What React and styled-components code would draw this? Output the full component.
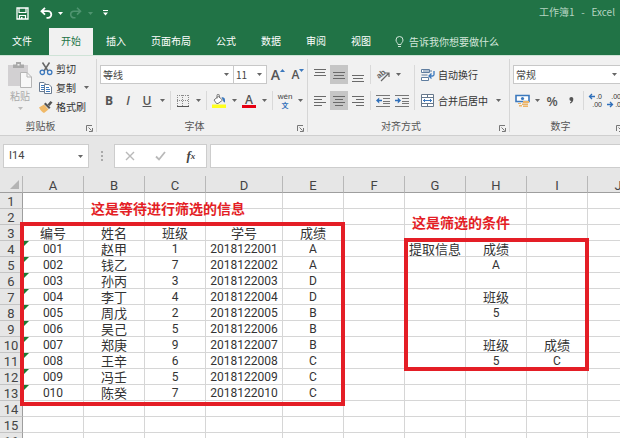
import styled, { createGlobalStyle } from 'styled-components'

const COLUMNS = ['A', 'B', 'C', 'D', 'E', 'F', 'G', 'H', 'I', 'J']
const ROW_COUNT = 16

const students = [
    ['001', '赵甲', '1', '2018122001', 'A'],
    ['002', '钱乙', '7', '2018122002', 'A'],
    ['003', '孙丙', '3', '2018122003', 'D'],
    ['004', '李丁', '4', '2018122004', 'D'],
    ['005', '周戊', '2', '2018122005', 'B'],
    ['006', '吴己', '5', '2018122006', 'B'],
    ['007', '郑庚', '9', '2018122007', 'B'],
    ['008', '王辛', '6', '2018122008', 'C'],
    ['009', '冯壬', '5', '2018122009', 'C'],
    ['010', '陈癸', '7', '2018122010', 'C'],
]

const cells = {
    A3: '编号', B3: '姓名', C3: '班级', D3: '学号', E3: '成绩',
    G4: '提取信息', H4: '成绩', H5: 'A',
    H7: '班级', H8: '5',
    H10: '班级', H11: '5', I10: '成绩', I11: 'C',
}
students.forEach((student, i) => {
    student.forEach((value, j) => {
        cells[COLUMNS[j] + (i + 4)] = value
    })
})

const isHan = (value) => /[\u4e00-\u9fff]/.test(value || '')

const tabs = ['文件', '开始', '插入', '页面布局', '公式', '数据', '审阅', '视图']

function Caret({ color = '#666' }){
    return(
        <svg width="5" height="3" viewBox="0 0 5 3"><path d="M0 0h5L2.5 3z" fill={color} /></svg>
    )
}

function Drop({ label }){
    return <DropButton aria-label={label}><Caret /></DropButton>
}

// horizontal strokes as [x, y, width]
function Lines({ rows }){
    return(
        <svg width="14" height="14" viewBox="0 0 14 14">
            {rows.map(([x, y, w]) => <rect key={y} x={x} y={y} width={w} height="1" fill="#6a6a6a" />)}
        </svg>
    )
}

function Indent({ out }){
    return(
        <svg width="14" height="14" viewBox="0 0 14 14">
            <path d="M0 1.5h14M7 4.5h7M7 7.5h7M7 9.5h7M0 12.5h14" stroke="#777" fill="none" />
            {out
                ? <path d="M0 6.5 3.2 3.4v2.3H6v1.6H3.2v2.3z" fill="#2f6fba" />
                : <path d="M6 6.5 2.8 3.4v2.3H0v1.6h2.8v2.3z" fill="#2f6fba" />}
        </svg>
    )
}

function RibbonGroup({ label, children, size }){
    return(
        <Group $size={size}>
            {children}
            <GroupFooter>
                <GroupLabel>{label}</GroupLabel>
                <Launcher aria-label={label + '设置'}>
                    <svg width="7" height="7" viewBox="0 0 7 7">
                        <path d="M.5 6V.5H6M2.5 2.5l3 3M6.5 3v3.5H3" stroke="#777" fill="none" />
                    </svg>
                </Launcher>
            </GroupFooter>
        </Group>
    )
}

function TitleBar(){
    return(
        <TitleRow>
            <QuickButton aria-label="保存" $w={27}>
                <svg width="13" height="13" viewBox="0 0 13 13">
                    <path d="M1 1h11v11H1z" stroke="#fff" strokeWidth="1.3" fill="none" />
                    <path d="M3 1v4.5h7V1M3.5 12V8.5h6V12" stroke="#fff" strokeWidth="1.2" fill="none" />
                    <path d="M5 10h1.5v2H5z" fill="#fff" />
                </svg>
            </QuickButton>
            <QuickButton aria-label="撤消" $w={21}>
                <svg width="13" height="12" viewBox="0 0 13 12">
                    <path d="M1.5 4.2H8a3.2 3.2 0 0 1 0 6.6H6.5M5 .8 1.5 4.2 5 7.6" stroke="#fff" strokeWidth="1.8" fill="none" />
                </svg>
            </QuickButton>
            <QuickButton aria-label="撤消列表" $w={7}><Caret color="#fff" /></QuickButton>
            <QuickButton aria-label="恢复" $w={23}>
                <svg width="13" height="12" viewBox="0 0 13 12">
                    <path d="M11.5 4.2H5a3.2 3.2 0 0 0 0 6.6h1.5M8 .8l3.5 3.4L8 7.6" stroke="#4f9470" strokeWidth="1.6" fill="none" />
                </svg>
            </QuickButton>
            <QuickButton aria-label="恢复列表" $w={7}><Caret color="#4f9470" /></QuickButton>
            <QuickButton aria-label="自定义快速访问工具栏" $w={23}>
                <svg width="5" height="6" viewBox="0 0 5 6">
                    <path d="M0 0h5v1H0zM0 2.5h5L2.5 5.5z" fill="#fff" />
                </svg>
            </QuickButton>
            <WindowTitle>工作簿1&nbsp;&nbsp; -&nbsp;&nbsp; Excel</WindowTitle>
        </TitleRow>
    )
}

function TabBar(){
    return(
        <TabRow>
            {tabs.map((tab, i) => (
                <Tab key={tab} $active={i === 1} $first={i === 0}>{tab}</Tab>
            ))}
            <TellMe>
                <svg width="9" height="12" viewBox="0 0 9 12">
                    <path d="M3 8.5C3 7 1 6.3 1 4a3.5 3.5 0 0 1 7 0c0 2.3-2 3-2 4.5zM3 10.5h3" stroke="#d3e6db" fill="none" />
                </svg>
                告诉我你想要做什么
            </TellMe>
        </TabRow>
    )
}

function Clipboard(){
    return(
        <RibbonGroup label="剪贴板" size={97}>
            <ClipboardBody>
                <PasteButton>
                    <svg width="24" height="26" viewBox="0 0 24 26">
                        <path d="M0 3h20v21H0z" fill="#d2d0d2" />
                        <path d="M5 2.5h3V0h5v2.5h3V6H5z" fill="#a9a9a9" />
                        <path d="M9.5 2h2v1.5h-2z" fill="#eee" />
                        <path d="M12.5 10.5H19l4.5 4.5v10.5h-11z" fill="#f8f8f8" stroke="#b5b5b5" />
                        <path d="M19 10.5V15h4.5" fill="none" stroke="#b5b5b5" />
                    </svg>
                    <span>粘贴</span>
                    <Caret color="#bbb" />
                </PasteButton>
                <ClipboardList>
                    <TextButton>
                        <svg width="14" height="14" viewBox="0 0 14 14">
                            <path d="M3.5.5 9 9M10.5.5 5 9" stroke="#666" strokeWidth="1.5" fill="none" />
                            <circle cx="3.3" cy="10.3" r="2.2" stroke="#3b78bd" strokeWidth="1.3" fill="none" />
                            <circle cx="10.7" cy="10.3" r="2.2" stroke="#3b78bd" strokeWidth="1.3" fill="none" />
                        </svg>
                        剪切
                    </TextButton>
                    <ToolRow $gap={2}>
                        <TextButton>
                            <svg width="14" height="14" viewBox="0 0 14 14">
                                <path d="M.5 1.5H5L7.5 4v6.5h-7z" fill="#fff" stroke="#6c7d92" />
                                <path d="M2 4.5h3M2 6.5h3M2 8.5h3" stroke="#3b78bd" />
                                <path d="M5.5 3.5H10L12.5 6v6.5h-7z" fill="#fff" stroke="#6c7d92" />
                                <path d="M7 6.5h3M7 8.5h4M7 10.5h4" stroke="#3b78bd" />
                            </svg>
                            复制
                        </TextButton>
                        <Drop label="复制选项" />
                    </ToolRow>
                    <TextButton>
                        <svg width="14" height="14" viewBox="0 0 14 14">
                            <path d="M0 7.5 5 4.5l4.5 5L5 13C3.5 12.5 1 10 0 7.5z" fill="#f0b968" />
                            <path d="M5 4l1.5-1.5 5 5L10 9z" fill="#555" />
                            <path d="M8.5 4.5 11.5 1l2 1.5L10.5 6z" fill="#555" />
                        </svg>
                        格式刷
                    </TextButton>
                </ClipboardList>
            </ClipboardBody>
        </RibbonGroup>
    )
}

function FontGroup(){
    return(
        <RibbonGroup label="字体" size={211}>
            <GroupBody>
                <ToolRow $gap={2}>
                    <ToolRow>
                        <Combo $w={134}>
                            <select aria-label="字体"><option>等线</option></select>
                            <Caret />
                        </Combo>
                        <Combo $w={33} $joined>
                            <select aria-label="字号"><option>11</option></select>
                            <Caret />
                        </Combo>
                    </ToolRow>
                    <Tool aria-label="增大字号">
                        <Letter $size={14}>A</Letter>
                        <svg width="5" height="12" viewBox="0 0 5 12"><path d="M0 3h5L2.5 0z" fill="#3b78bd" /></svg>
                    </Tool>
                    <Tool aria-label="减小字号">
                        <Letter $size={12}>A</Letter>
                        <svg width="5" height="12" viewBox="0 0 5 12"><path d="M0 0h5L2.5 3z" fill="#3b78bd" /></svg>
                    </Tool>
                </ToolRow>
                <ToolRow $gap={1}>
                    <Tool aria-label="加粗"><Letter $size={12} $bold>B</Letter></Tool>
                    <Tool aria-label="倾斜"><Letter $size={12} $italic>I</Letter></Tool>
                    <Tool aria-label="下划线"><Letter $size={12} $underline>U</Letter></Tool>
                    <Drop label="下划线选项" />
                    <Separator />
                    <Tool aria-label="边框">
                        <svg width="12" height="12" viewBox="0 0 12 12">
                            <path d="M.5 0v11M5.5 0v11M11.5 0v11M0 .5h12M0 5.5h12" stroke="#8c8c8c" strokeDasharray="1 1" fill="none" />
                            <path d="M0 11.5h12" stroke="#555" />
                        </svg>
                    </Tool>
                    <Drop label="边框选项" />
                    <Separator />
                    <Tool aria-label="填充颜色">
                        <svg width="14" height="14" viewBox="0 0 14 14">
                            <path d="M2 6 6.5 2.2l4 4L6 9.5H4.5z" fill="#fff" stroke="#777" />
                            <path d="M5 4.5v-3a1.2 1.2 0 0 1 2.4 0V4" fill="none" stroke="#777" />
                            <path d="M9.5 3.5c2-.5 3.5.5 3.5 2.5v2.5c-1 0-2-1-2-2.5z" fill="#3b78bd" />
                            <path d="M0 10.5h14V14H0z" fill="#ffff1e" />
                        </svg>
                    </Tool>
                    <Drop label="填充颜色选项" />
                    <Tool aria-label="字体颜色"><FontColor>A</FontColor></Tool>
                    <Drop label="字体颜色选项" />
                    <Separator />
                    <Tool aria-label="拼音指南">
                        <Phonetic><span>wén</span><b>文</b></Phonetic>
                    </Tool>
                    <Drop label="拼音选项" />
                </ToolRow>
            </GroupBody>
        </RibbonGroup>
    )
}

function AlignGroup(){
    return(
        <RibbonGroup label="对齐方式" size={202}>
            <SplitBody>
                <ToolColumn>
                    <ToolRow $gap={1}>
                        <Tool aria-label="顶端对齐"><Lines rows={[[1, 1, 12], [2, 4, 10], [1, 7, 12]]} /></Tool>
                        <Tool aria-label="垂直居中" $on><Lines rows={[[1, 4, 12], [2, 7, 10], [1, 10, 12]]} /></Tool>
                        <Tool aria-label="底端对齐"><Lines rows={[[1, 7, 12], [2, 10, 10], [1, 13, 12]]} /></Tool>
                        <Separator />
                        <Tool aria-label="方向">
                            <svg width="16" height="16" viewBox="0 0 16 16">
                                <text x="3" y="11" fontSize="8" fontFamily="Liberation Sans, sans-serif" fontWeight="bold" fill="#666" transform="rotate(-40 5 10)">ab</text>
                                <path d="M6 14 14 6M14 10V6h-4" stroke="#666" strokeWidth="1.2" fill="none" />
                            </svg>
                        </Tool>
                        <Drop label="方向选项" />
                    </ToolRow>
                    <ToolRow $gap={1}>
                        <Tool aria-label="左对齐"><Lines rows={[[1, 2, 12], [1, 5, 8], [1, 8, 12], [1, 11, 8]]} /></Tool>
                        <Tool aria-label="居中" $on><Lines rows={[[1, 2, 12], [3, 5, 8], [1, 8, 12], [3, 11, 8]]} /></Tool>
                        <Tool aria-label="右对齐"><Lines rows={[[1, 2, 12], [5, 5, 8], [1, 8, 12], [5, 11, 8]]} /></Tool>
                        <Separator />
                        <Tool aria-label="减少缩进量"><Indent out /></Tool>
                        <Tool aria-label="增加缩进量"><Indent /></Tool>
                    </ToolRow>
                </ToolColumn>
                <Separator />
                <ToolColumn>
                    <TextButton>
                        <svg width="14" height="14" viewBox="0 0 14 14">
                            <path d="M.5 1.5h8v3h-8zM.5 9.5h7v3h-7z" fill="#fff" stroke="#5f7d9f" />
                            <path d="M2 3h9M.5 7h6" stroke="#5f7d9f" fill="none" />
                            <path d="M13 3v3.5Q13 8 11.5 8H8M10.5 5.5 8 8l2.5 2.5" stroke="#3b78bd" strokeWidth="1.3" fill="none" />
                        </svg>
                        自动换行
                    </TextButton>
                    <ToolRow $gap={2}>
                        <TextButton>
                            <svg width="14" height="14" viewBox="0 0 14 14">
                                <path d="M.5.5h12v12H.5zM.5 3.5h12M.5 9.5h12M6.5.5v3M6.5 9.5v3" fill="#fff" stroke="#66788c" />
                                <path d="M2 6.5h9M4 5 2.5 6.5 4 8M9 5l1.5 1.5L9 8" stroke="#3b78bd" fill="none" />
                            </svg>
                            合并后居中
                        </TextButton>
                        <Drop label="合并选项" />
                    </ToolRow>
                </ToolColumn>
            </SplitBody>
        </RibbonGroup>
    )
}

function Decimals({ top, bottom, less }){
    return(
        <svg width="16" height="16" viewBox="0 0 16 16">
            <g fontSize="7" fontFamily="Liberation Sans, sans-serif" fill="#333" textAnchor="end">
                <text x="14" y="6">{top}</text>
                <text x="14" y="14">{bottom}</text>
            </g>
            {less
                ? <path d="M0 11.5h5M3 9l2.5 2.5L3 14" stroke="#2f6fba" strokeWidth="1.3" fill="none" />
                : <path d="M7 3.5H2M4 1 1.5 3.5 4 6" stroke="#2f6fba" strokeWidth="1.3" fill="none" />}
        </svg>
    )
}

function NumberGroup(){
    return(
        <RibbonGroup label="数字" size={117}>
            <GroupBody>
                <ToolRow>
                    <Combo $w={109}>
                        <select aria-label="数字格式"><option>常规</option></select>
                        <Caret />
                    </Combo>
                </ToolRow>
                <ToolRow $gap={1}>
                    <Tool aria-label="会计数字格式">
                        <svg width="15" height="14" viewBox="0 0 15 14">
                            <path d="M1 1.5h13v6H1z" fill="#fff" stroke="#3b78bd" strokeWidth="1.6" />
                            <circle cx="7.5" cy="4.5" r="1.6" fill="#3b78bd" />
                            <path d="M8 7h6v2H8zM7 9.5h6V11H7zM8 11.5h5V13H8zM3 9h3v1H3zM4 11h3v1.5H4z" fill="#ecb468" />
                        </svg>
                    </Tool>
                    <Drop label="货币选项" />
                    <Tool aria-label="百分比样式"><Letter $size={13}>%</Letter></Tool>
                    <Tool aria-label="千位分隔样式">
                        <svg width="5" height="7" viewBox="0 0 5 7"><path d="M2.3 0a2 2 0 0 1 2 2.2C4.3 4.5 3 6 1 6.5V5.4c.8-.3 1.3-.8 1.4-1.4A2 2 0 0 1 2.3 0z" fill="#555" /></svg>
                    </Tool>
                    <Separator />
                    <Tool aria-label="增加小数位数"><Decimals top=".0" bottom=".00" /></Tool>
                    <Tool aria-label="减少小数位数"><Decimals top=".00" bottom=".0" less /></Tool>
                </ToolRow>
            </GroupBody>
        </RibbonGroup>
    )
}

function FormulaBar(){
    return(
        <FormulaRow>
            <NameBox>
                <input aria-label="名称框" defaultValue="I14" />
                <Caret />
            </NameBox>
            <Grip>
                <svg width="2" height="10" viewBox="0 0 2 10"><path d="M0 0h2v2H0zM0 4h2v2H0zM0 8h2v2H0z" fill="#aaa" /></svg>
            </Grip>
            <FormulaTools>
                <FormulaButton aria-label="取消">
                    <svg width="10" height="10" viewBox="0 0 10 10"><path d="M1 1l8 8M9 1 1 9" stroke="#b9b9b9" strokeWidth="1.4" /></svg>
                </FormulaButton>
                <FormulaButton aria-label="输入">
                    <svg width="11" height="10" viewBox="0 0 11 10"><path d="M1 5.5 4 8.5 10 1" stroke="#b9b9b9" strokeWidth="1.8" fill="none" /></svg>
                </FormulaButton>
                <FormulaButton aria-label="插入函数"><i>f</i><sub>x</sub></FormulaButton>
            </FormulaTools>
            <FormulaInput aria-label="编辑栏" />
        </FormulaRow>
    )
}

function Sheet(){
    const rows = Array.from({ length: ROW_COUNT }, (_, i) => i + 1)

    return(
        <SheetArea>
            <Grid>
                <colgroup>
                    <Col $w={23} />
                    {COLUMNS.map((c) => <Col key={c} $w={c === 'D' ? 77 : 61} />)}
                </colgroup>
                <thead>
                    <tr>
                        <Corner>
                            <svg width="9" height="9" viewBox="0 0 9 9"><path d="M9 0v9H0z" fill="#b4b4b4" /></svg>
                        </Corner>
                        {COLUMNS.map((c) => <ColumnHead key={c} scope="col">{c}</ColumnHead>)}
                    </tr>
                </thead>
                <tbody>
                    {rows.map((row) => (
                        <tr key={row}>
                            <RowHead scope="row">{row}</RowHead>
                            {COLUMNS.map((c) => {
                                const value = cells[c + row]
                                return(
                                    <Cell key={c} $han={isHan(value)}>
                                        {value}
                                        {c === 'A' && row > 3 && value && <TextFlag />}
                                    </Cell>
                                )
                            })}
                        </tr>
                    ))}
                </tbody>
            </Grid>
            <Frame $x={20} $y={46} $w={325} $h={184} />
            <Frame $x={404} $y={62} $w={185} $h={133} />
            <Note $x={91} $y={22}>这是等待进行筛选的信息</Note>
            <Note $x={412} $y={36}>这是筛选的条件</Note>
        </SheetArea>
    )
}

function App(){
    return(
        <Window>
            <GlobalStyle />
            <TitleBar />
            <TabBar />
            <Ribbon>
                <Clipboard />
                <FontGroup />
                <AlignGroup />
                <NumberGroup />
            </Ribbon>
            <FormulaBar />
            <Sheet />
        </Window>
    )
}

export default App

const GlobalStyle = createGlobalStyle`
*{
box-sizing: border-box;
}
body{
margin: 0;
overflow: hidden;
}
button, input, select{
font: inherit;
color: inherit;
margin: 0;
padding: 0;
border: 0;
background: transparent;
}
svg{
display: block;
flex-shrink: 0;
}
`
const Window = styled.div`
display: flex;
flex-direction: column;
height: 100vh;
overflow: hidden;
background: #e6e6e6;
color: #444;
font-family: "Noto Sans CJK SC", sans-serif;
font-size: 10px;
line-height: 16px;
`
const TitleRow = styled.header`
display: flex;
align-items: center;
flex-shrink: 0;
height: 28px;
padding: 0 5px 2px 9px;
background: #217346;
color: #b5d3c1;
`
const QuickButton = styled.button`
display: flex;
align-items: center;
justify-content: center;
width: ${(p) => p.$w}px;
height: 20px;
`
const WindowTitle = styled.span`
margin-left: auto;
padding-bottom: 2px;
white-space: nowrap;
`
const TabRow = styled.nav`
display: flex;
flex-shrink: 0;
gap: 1px;
height: 28px;
background: #217346;
border-bottom: 1px solid #cfe3d7;
white-space: nowrap;
`
const Tab = styled.button`
padding: 0 12px 2px;
margin-right: ${(p) => (p.$first ? 4 : 0)}px;
background: ${(p) => (p.$active ? '#f1f1f1' : 'transparent')};
color: ${(p) => (p.$active ? '#217346' : '#fff')};
`
const TellMe = styled.button`
display: flex;
align-items: center;
gap: 5px;
padding: 0 11px;
color: #d3e6db;
`
const Ribbon = styled.div`
display: flex;
flex-shrink: 0;
overflow: hidden;
padding-bottom: 1px;
background: #f1f1f1;
border-bottom: 1px solid #cfcfcf;
`
const Group = styled.section`
position: relative;
display: flex;
flex-direction: column;
flex-shrink: 0;
width: ${(p) => p.$size}px;
&::after{
content: "";
position: absolute;
top: 3px;
bottom: 2px;
right: 0;
width: 1px;
background: #d6d6d6;
}
`
const GroupBody = styled.div`
display: flex;
flex-direction: column;
gap: 7px;
height: 62px;
padding: 9px 3px 0;
`
const SplitBody = styled.div`
display: flex;
gap: 1px;
height: 62px;
padding: 9px 3px 8px;
`
const ClipboardBody = styled.div`
display: flex;
height: 62px;
padding: 3px 4px 0;
`
const ClipboardList = styled.div`
display: flex;
flex-direction: column;
`
const ToolColumn = styled.div`
display: flex;
flex-direction: column;
gap: 7px;
`
const ToolRow = styled.div`
display: flex;
align-items: center;
gap: ${(p) => p.$gap || 0}px;
height: 19px;
`
const Tool = styled.button`
display: flex;
align-items: center;
justify-content: center;
flex-shrink: 0;
width: 18px;
height: 19px;
background: ${(p) => (p.$on ? '#c6c6c6' : 'transparent')};
`
const DropButton = styled.button`
display: flex;
align-items: center;
justify-content: center;
flex-shrink: 0;
width: 10px;
height: 19px;
`
const Separator = styled.span`
align-self: stretch;
flex-shrink: 0;
width: 1px;
margin: 0 2px;
background: #d9d9d9;
`
const TextButton = styled.button`
display: flex;
align-items: center;
gap: 3px;
height: 19px;
padding: 0 3px;
white-space: nowrap;
color: #333;
`
const PasteButton = styled.button`
display: flex;
flex-direction: column;
align-items: center;
width: 32px;
padding-top: 3px;
color: #aaa;
span{
margin-bottom: 3px;
}
`
const Letter = styled.span`
font-family: "Open Sans", sans-serif;
font-size: ${(p) => p.$size}px;
font-weight: ${(p) => (p.$bold ? 700 : 600)};
font-style: ${(p) => (p.$italic ? 'italic' : 'normal')};
text-decoration: ${(p) => (p.$underline ? 'underline' : 'none')};
color: #555;
`
const FontColor = styled.span`
width: 14px;
height: 14px;
border-bottom: 3px solid #e60012;
font-family: "Open Sans", sans-serif;
font-size: 12px;
font-weight: 600;
line-height: 11px;
color: #555;
`
const Phonetic = styled.span`
display: flex;
flex-direction: column;
align-items: center;
font-family: "Liberation Sans", "Noto Sans CJK SC", sans-serif;
font-size: 8px;
line-height: 9px;
b{
font-size: 7px;
line-height: 9px;
color: #2f6fba;
}
`
const Combo = styled.div`
position: relative;
width: ${(p) => p.$w}px;
height: 19px;
background: #fff;
border: 1px solid #c8c8c8;
border-left-width: ${(p) => (p.$joined ? 0 : 1)}px;
select{
appearance: none;
width: 100%;
height: 100%;
padding-left: 2px;
}
svg{
position: absolute;
right: 4px;
top: 7px;
pointer-events: none;
}
`
const GroupFooter = styled.div`
display: flex;
align-items: center;
height: 16px;
`
const GroupLabel = styled.span`
flex: 1;
text-align: center;
color: #555;
`
const Launcher = styled.button`
display: flex;
align-items: center;
justify-content: center;
width: 16px;
height: 16px;
padding-top: 4px;
`
const FormulaRow = styled.div`
display: flex;
flex-shrink: 0;
height: 40px;
padding: 8px 0 8px 3px;
`
const NameBox = styled.div`
display: flex;
align-items: center;
width: 86px;
padding: 0 5px;
background: #fff;
border: 1px solid #cdcdcd;
input{
flex: 1;
min-width: 0;
font-family: Roboto, sans-serif;
font-size: 11px;
}
`
const Grip = styled.span`
display: flex;
align-items: center;
justify-content: center;
width: 25px;
`
const FormulaTools = styled.div`
display: flex;
justify-content: space-around;
align-items: center;
width: 93px;
background: #fff;
border: 1px solid #cdcdcd;
`
const FormulaButton = styled.button`
display: flex;
align-items: center;
justify-content: center;
width: 20px;
height: 20px;
font-family: "Liberation Serif", serif;
font-size: 13px;
font-weight: bold;
sub{
font-size: 9px;
font-style: italic;
}
`
const FormulaInput = styled.input`
flex: 1;
min-width: 0;
margin-left: 3px;
padding: 0 6px;
background: #fff;
border: 1px solid #cdcdcd;
border-right: 0;
`
const SheetArea = styled.main`
position: relative;
flex: 1;
min-height: 0;
overflow: hidden;
background: #fff;
`
const Grid = styled.table`
table-layout: fixed;
width: max-content;
border-collapse: separate;
border-spacing: 0;
font-family: Roboto, "Noto Sans CJK SC", sans-serif;
line-height: 13px;
`
const Col = styled.col`
width: ${(p) => p.$w}px;
`
const ColumnHead = styled.th`
height: 17px;
padding: 3px 0 0;
font-size: 13px;
font-weight: 400;
background: #e6e6e6;
border-right: 1px solid #b8b8b8;
border-bottom: 1px solid #9e9e9e;
`
const Corner = styled.td`
padding: 0 3px 3px 0;
vertical-align: bottom;
background: #e6e6e6;
border-right: 1px solid #b8b8b8;
border-bottom: 1px solid #9e9e9e;
svg{
margin-left: auto;
}
`
const RowHead = styled.th`
height: 16px;
padding: 2px 0 0;
font-size: 13px;
font-weight: 400;
background: #e6e6e6;
border-right: 1px solid #9e9e9e;
border-bottom: 1px solid #c4c4c4;
`
const Cell = styled.td`
position: relative;
height: 16px;
padding: 2px 0 0;
text-align: center;
white-space: nowrap;
font-size: ${(p) => (p.$han ? 13 : 12)}px;
color: #333;
border-right: 1px solid #d6d6d6;
border-bottom: 1px solid #d6d6d6;
`
const TextFlag = styled.span`
position: absolute;
top: 0;
left: 0;
border-top: 6px solid #1d7a34;
border-right: 6px solid transparent;
`
const Frame = styled.div`
position: absolute;
left: ${(p) => p.$x}px;
top: ${(p) => p.$y}px;
width: ${(p) => p.$w}px;
height: ${(p) => p.$h}px;
border: 4px solid #e41e26;
pointer-events: none;
`
const Note = styled.p`
position: absolute;
left: ${(p) => p.$x}px;
top: ${(p) => p.$y}px;
margin: 0;
font-size: 14px;
font-weight: bold;
line-height: 20px;
white-space: nowrap;
color: #e41e26;
`
